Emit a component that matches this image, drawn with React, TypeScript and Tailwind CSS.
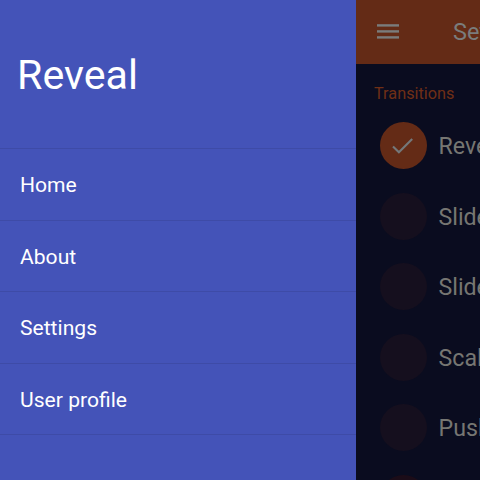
const menu = ["Home", "About", "Settings", "User profile"];
const transitions = ["Reveal", "Slide in on top", "Slide along", "Scale down", "Push", "Rotate"];

function Drawer() {
  return (
    <nav className="h-full w-[356px] shrink-0 bg-[#4453b8] text-white">
      <h1 className="h-[149px] border-b border-[#3e4ba7] pt-[50px] pl-[17px] text-[41.2px] leading-[50px]">
        Reveal
      </h1>
      <ul>
        {menu.map((label) => (
          <li
            key={label}
            className="flex h-[71.5px] items-center border-b border-[#3e4ba7] pt-[2px] pl-[20px] text-[21.1px]"
          >
            {label}
          </li>
        ))}
      </ul>
    </nav>
  );
}

function Page() {
  return (
    <main className="h-full min-w-0 flex-1 overflow-hidden bg-[#0a0c1f] whitespace-nowrap">
      <header className="flex h-16 items-center bg-[#642b16] pl-[21px] text-[#7a7c7c]">
        <svg className="mr-[54px] shrink-0" width="22" height="16" viewBox="0 0 22 16" fill="currentColor">
          <rect y="0.2" width="22" height="2.4" />
          <rect y="6.2" width="22" height="2.4" />
          <rect y="12.2" width="22" height="2.4" />
        </svg>
        <span className="pt-[2px] text-[23.5px]">Settings</span>
      </header>
      <h2 className="h-[46.25px] pt-[19px] pl-[18px] text-[16.3px] leading-[22px] text-[#702f16]">
        Transitions
      </h2>
      <ul>
        {transitions.map((label, i) => (
          <li key={label} className="flex h-[70.5px] items-center pl-[23.5px] text-[23.2px] text-[#767672]">
            <span
              className={
                "mr-[12px] flex size-[47px] shrink-0 items-center justify-center rounded-full " +
                (i === 0 ? "bg-[#642b16]" : i === 5 ? "bg-[#1b0c18]" : "bg-[#150f1e]")
              }
            >
              {i === 0 && (
                <svg width="22" height="18" viewBox="0 0 22 18" fill="none" stroke="#74787a" strokeWidth="2.1">
                  <path d="M1 9.4 6.9 15.3 20.2 2" />
                </svg>
              )}
            </span>
            <span className="pt-[2px]">{label}</span>
          </li>
        ))}
      </ul>
    </main>
  );
}

export default function App() {
  return (
    <div className="flex h-[480px] w-[480px] overflow-hidden font-[Roboto,sans-serif]">
      <Drawer />
      <Page />
    </div>
  );
}
